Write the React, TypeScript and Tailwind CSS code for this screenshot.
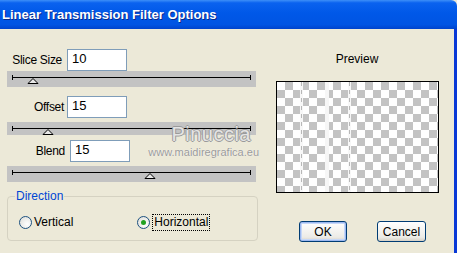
import React from 'react';

const Slider: React.FC<{ thumb: number; h: number; mt: string }> = ({ thumb, h, mt }) => (
  <div className={`w-[249px] bg-[#c3c3c3] ${mt}`} style={{ height: h }}>
    <svg width="249" height={h} className="block">
      <line x1="5" y1="6.5" x2="244" y2="6.5" stroke="#000" strokeWidth="1" />
      <line x1="5.5" y1="4" x2="5.5" y2="9" stroke="#000" strokeWidth="1" />
      <line x1="243.5" y1="4" x2="243.5" y2="9" stroke="#000" strokeWidth="1" />
      <polygon
        points={`${thumb},7.5 ${thumb + 5},12.5 ${thumb - 5},12.5`}
        fill="#e8e8e8"
        stroke="#000"
        strokeWidth="1"
      />
    </svg>
  </div>
);

const Field: React.FC<{ label: string; value: string; labelW: string; gap: string; mt: string }> = ({
  label,
  value,
  labelW,
  gap,
  mt,
}) => (
  <div className={`flex items-center h-[22px] ${mt}`}>
    <span className={`${labelW} text-right text-[12px] tracking-[-0.3px] text-black`}>{label}</span>
    <div
      className={`${gap} w-[60px] h-[22px] bg-white border border-[#7f9db9] pl-[4px] text-[13px] leading-[18px] text-black`}
    >
      {value}
    </div>
  </div>
);

const Radio: React.FC<{ checked?: boolean }> = ({ checked }) => (
  <span className="w-[13px] h-[13px] rounded-full border border-[#1c5180] bg-[radial-gradient(circle_at_65%_65%,#ffffff_0%,#dcdcd6_100%)] flex items-center justify-center">
    {checked && <span className="w-[5px] h-[5px] rounded-full bg-[#21a121]" />}
  </span>
);

export default function App() {
  return (
    <div className="relative w-[457px] h-[253px] bg-[#ECE9D8] flex flex-col overflow-hidden font-['Liberation_Sans',Arial,sans-serif]">
      {/* Title bar */}
      <div className="h-[29px] shrink-0 rounded-tr-[6px] bg-[linear-gradient(to_bottom,#3d8ff8_0%,#0a62ef_10%,#0058e8_45%,#0054e3_85%,#0043cc_100%)] flex items-center pl-[2px]">
        <span className="text-white font-bold text-[13px] [text-shadow:1px_1px_#0b2a8a]">
          Linear Transmission Filter Options
        </span>
      </div>

      <div className="flex flex-1 border-r-[3px] border-[#0838d6]">
        {/* Left column */}
        <div className="w-[260px] pl-[7px] flex flex-col">
          <Field label="Slice Size" value="10" labelW="w-[55px]" gap="ml-[5px]" mt="mt-[20px]" />
          <Slider thumb={26} h={16} mt="mt-0" />
          <Field label="Offset" value="15" labelW="w-[57px]" gap="ml-[3px]" mt="mt-[9px]" />
          <Slider thumb={41} h={13} mt="mt-[4px]" />
          <Field label="Blend" value="15" labelW="w-[58px]" gap="ml-[5px]" mt="mt-[5px]" />
          <Slider thumb={143} h={16} mt="mt-[4px]" />

          <fieldset className="mt-[7px] w-[251px] h-[52px] border border-[#d5d2c2] rounded-[4px] px-0">
            <legend className="ml-[7px] px-[1px] text-[12px] leading-[14px] text-[#0046d5]">Direction</legend>
            <div className="flex items-center mt-[10px] text-[12px] text-black">
              <div className="flex items-center ml-[11px] gap-[2px]">
                <Radio />
                <span>Vertical</span>
              </div>
              <div className="flex items-center ml-[64px] gap-[2px]">
                <Radio checked />
                <span className="border border-dotted border-black px-[1px] leading-[15px]">Horizontal</span>
              </div>
            </div>
          </fieldset>
        </div>

        {/* Right column */}
        <div className="flex-1 flex flex-col">
          <div className="flex flex-col items-center">
            <span className="mt-[21px] text-[12px] text-black">Preview</span>
            <div className="relative mt-[13px] w-[163px] h-[112px] border border-black bg-[conic-gradient(#c3c3c3_25%,#ffffff_0_50%,#c3c3c3_0_75%,#ffffff_0)] bg-[length:16px_16px]">
              <svg width="161" height="110" className="absolute inset-0">
                <rect x="23" y="0" width="3" height="110" fill="#f7f7f7" />
                <line x1="24.5" y1="0" x2="24.5" y2="110" stroke="#b8b8b8" strokeWidth="1" strokeDasharray="4 4" />
                <rect x="48" y="0" width="4" height="110" fill="#f6f6f6" />
                <rect x="71" y="0" width="3" height="110" fill="#f7f7f7" />
                <line x1="72.5" y1="0" x2="72.5" y2="110" stroke="#b8b8b8" strokeWidth="1" strokeDasharray="4 4" />
              </svg>
            </div>
          </div>
          <div className="flex mt-[28px] ml-[39px] gap-[30px] text-[12px] text-black">
            <button className="w-[48px] h-[21px] rounded-[3px] border border-[#003c74] bg-[linear-gradient(to_bottom,#ffffff,#ecebe6_80%,#d6d0c5)] shadow-[inset_0_0_0_1px_#9cb8f0,inset_0_0_0_2px_#c6d8f8]">
              OK
            </button>
            <button className="w-[49px] h-[21px] rounded-[3px] border border-[#003c74] bg-[linear-gradient(to_bottom,#ffffff,#ecebe6_80%,#d6d0c5)]">
              Cancel
            </button>
          </div>
        </div>
      </div>

      {/* Watermark */}
      <div className="absolute left-[145px] top-[124px] w-[114px] flex flex-col items-end pointer-events-none">
        <span className="text-[20px] leading-[20px] pr-[8px] tracking-[0.5px] text-[#e4e4e4] [text-shadow:1px_0_#9a9a9a,-1px_0_#9a9a9a,0_1px_#9a9a9a,0_-1px_#9a9a9a]">
          Pinuccia
        </span>
        <span className="text-[11px] leading-[13px] mt-[2px] text-[#9a9a9a] [text-shadow:0_0_1px_#fff]">
          www.maidiregrafica.eu
        </span>
      </div>
    </div>
  );
}
